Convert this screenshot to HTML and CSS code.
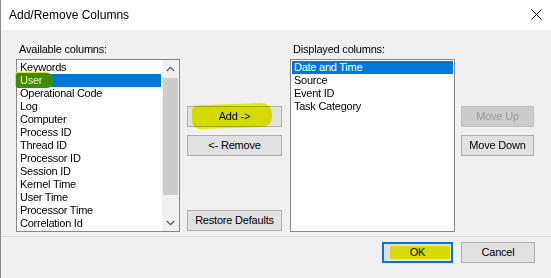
FILE: index.html
```html
<!DOCTYPE html>
<html>
<head>
<meta charset="utf-8">
<link rel="stylesheet" href="styles.css">
</head>
<body>
<div class="window">
  <div class="titlebar">
    <span class="title">Add/Remove Columns</span>
    <svg class="close" width="11" height="11" viewBox="0 0 11 11"><path d="M0.5 0.5 L10.5 10.5 M10.5 0.5 L0.5 10.5" stroke="#000" stroke-width="1"/></svg>
  </div>
  <div class="content">
    <div class="col">
      <div class="label">Available columns:</div>
      <div class="listbox">
        <div class="items">
          <div class="item">Keywords</div>
          <div class="item sel"><span class="hl-user"></span><span class="hl-text">User</span></div>
          <div class="item">Operational Code</div>
          <div class="item">Log</div>
          <div class="item">Computer</div>
          <div class="item">Process ID</div>
          <div class="item">Thread ID</div>
          <div class="item">Processor ID</div>
          <div class="item">Session ID</div>
          <div class="item">Kernel Time</div>
          <div class="item">User Time</div>
          <div class="item">Processor Time</div>
          <div class="item">Correlation Id</div>
        </div>
        <div class="scrollbar">
          <div class="arrow"><svg width="9" height="6" viewBox="0 0 9 6"><path d="M0.8 5 L4.5 1.3 L8.2 5" fill="none" stroke="#606060" stroke-width="1.3"/></svg></div>
          <div class="thumb"></div>
          <div class="track"></div>
          <div class="arrow"><svg width="9" height="6" viewBox="0 0 9 6"><path d="M0.8 1 L4.5 4.7 L8.2 1" fill="none" stroke="#606060" stroke-width="1.3"/></svg></div>
        </div>
      </div>
    </div>
    <div class="mid">
      <button class="btn">Add -&gt;<span class="hl hl-add"></span></button>
      <button class="btn gap">&lt;- Remove</button>
      <button class="btn bottom">Restore Defaults</button>
    </div>
    <div class="col right">
      <div class="label">Displayed columns:</div>
      <div class="listbox">
        <div class="items">
          <div class="item sel">Date and Time</div>
          <div class="item">Source</div>
          <div class="item">Event ID</div>
          <div class="item">Task Category</div>
        </div>
      </div>
    </div>
    <div class="side">
      <button class="btn disabled">Move Up</button>
      <button class="btn gap">Move Down</button>
    </div>
  </div>
  <div class="footer">
    <button class="btn ok">OK<span class="hl hl-ok"></span></button>
    <button class="btn cancel">Cancel</button>
  </div>
</div>
</body>
</html>
```
FILE: styles.css
```css
* { box-sizing: border-box; }
body {
  margin: 0;
  font-family: "Liberation Sans", Arial, sans-serif;
  font-size: 11px;
  color: #000;
  background: #f0f0f0;
}
.window {
  width: 551px;
  height: 278px;
  border-left: 1px solid #8a8a8a;
  display: flex;
  flex-direction: column;
  background: #f0f0f0;
  overflow: hidden;
}
.titlebar {
  height: 30px;
  flex: none;
  background: #fff;
  display: flex;
  align-items: center;
  justify-content: space-between;
  padding: 0 9px 0 8px;
}
.title { font-size: 12px; line-height: 14px; }
.close { display: block; margin-top: -1px; }
.content {
  display: flex;
  height: 206px;
  flex: none;
  padding: 13px 0 4px 15px;
}
.col { display: flex; flex-direction: column; width: 164px; }
.col.right { width: 165px; margin-left: 8px; }
.label { line-height: 13px; padding-left: 3px; margin-bottom: 3px; white-space: nowrap; letter-spacing: -0.2px; }
.listbox {
  height: 173px;
  border: 1px solid #828790;
  background: #fff;
  display: flex;
}
.items { flex: 1; padding: 1px 1px 0 1px; }
.item {
  height: 13px;
  line-height: 13px;
  padding-left: 2px;
  white-space: nowrap;
  position: relative;
  letter-spacing: -0.25px;
}
.item.sel { background: #0078d7; color: #fff; }
.scrollbar {
  width: 17px;
  display: flex;
  flex-direction: column;
  background: #f0f0f0;
}
.arrow {
  height: 17px;
  display: flex;
  align-items: center;
  justify-content: center;
}
.thumb { height: 117px; margin: 1px 1px 0 1px; background: #cdcdcd; }
.track { flex: 1; }
.mid {
  width: 95px;
  margin-left: 7px;
  display: flex;
  flex-direction: column;
  padding: 63px 0 1px 0;
}
.side {
  width: 73px;
  margin-left: 6px;
  display: flex;
  flex-direction: column;
  padding-top: 63px;
}
.btn {
  height: 21px;
  border: 1px solid #adadad;
  background: #e1e1e1;
  font: inherit;
  color: #000;
  padding: 0;
  line-height: 19px;
  text-align: center;
  position: relative;
  white-space: nowrap;
  letter-spacing: -0.2px;
}
.btn.gap { margin-top: 8px; }
.btn.bottom { margin-top: auto; }
.btn.disabled { background: #cccccc; border-color: #bfbfbf; color: #9a9a9a; }
.footer {
  flex: 1;
  border-top: 1px solid #dcdcdc;
  display: flex;
  justify-content: flex-end;
  align-items: flex-start;
  padding: 5px 16px 0 0;
  gap: 8px;
}
.btn.ok { width: 71px; border: 2px solid #0078d7; line-height: 17px; }
.btn.cancel { width: 74px; }
.hl {
  position: absolute;
  background: #f4f700;
  mix-blend-mode: multiply;
  pointer-events: none;
}
.hl-user {
  position: absolute;
  left: -2px;
  top: -1px;
  width: 37px;
  height: 15px;
  background: #3e8c06;
  border-radius: 2px 6px 6px 2px;
  box-shadow: -1px -1px 0 #dbe63a;
}
.hl-text { position: relative; color: #eef3b0; }
.hl-add { left: 4px; top: -3px; width: 80px; height: 24px; border-radius: 6px 10px 10px 8px; transform: rotate(-2deg); }
.hl-ok { left: 6px; top: 2px; width: 60px; height: 13px; border-radius: 2px; }
```
